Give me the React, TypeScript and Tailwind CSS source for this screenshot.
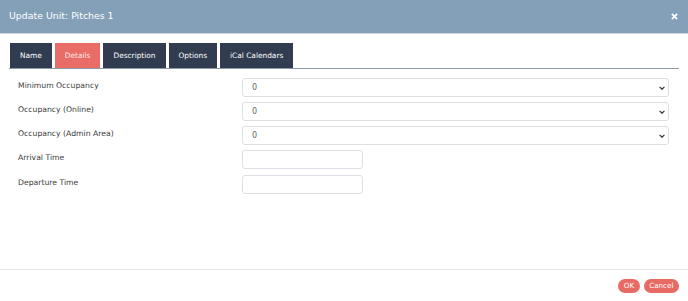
import React from 'react'

const tabs = ['Name', 'Details', 'Description', 'Options', 'iCal Calendars']

const Chevron: React.FunctionComponent = () => (
	<svg viewBox="0 0 10 6" className="h-[4px] w-[6px]" aria-hidden="true">
		<path d="M1 1 L5 5 L9 1" fill="none" stroke="#333" strokeWidth={2} />
	</svg>
)

const SelectRow: React.FunctionComponent<{label: string, value: string}> = ({label, value}) => (
	<div className="flex h-[24px] items-start">
		<div className="w-[233px] pl-[9px] pt-[2px] text-[7.7px] text-[#3a3a3a]">{label}</div>
		<div className="flex h-[19px] flex-1 items-center justify-between rounded-[3px] border border-[#dcdfe3] pl-[9px] pr-[3px] text-[8px] text-[#666]">
			<span>{value}</span>
			<Chevron />
		</div>
	</div>
)

const InputRow: React.FunctionComponent<{label: string}> = ({label}) => (
	<div className="flex h-[24.5px] items-start">
		<div className="w-[233px] pl-[9px] pt-[2px] text-[7.7px] text-[#3a3a3a]">{label}</div>
		<div className="h-[19px] w-[121px] rounded-[3px] border border-[#dcdfe3]" />
	</div>
)

export default function App() {
	return (
		<div className="flex h-[301px] w-[688px] flex-col bg-white" style={{fontFamily: '"DejaVu Sans", sans-serif'}}>
			<div className="flex h-[34px] items-center justify-between border-b border-[#c9d5df] bg-[#84a0b8] pl-[9px] pr-[10px]">
				<span className="text-[9.4px] text-white">Update Unit: Pitches 1</span>
				<svg viewBox="0 0 8 8" className="h-[7px] w-[7px]" aria-hidden="true">
					<path d="M1 1 L7 7 M7 1 L1 7" stroke="white" strokeWidth={2} />
				</svg>
			</div>
			<div className="flex-1 px-[9px] pt-[9px]">
				<div className="flex gap-[3px] border-b border-[#8d9aa5] pl-[1px]">
					{tabs.map((t) => (
						<div
							key={t}
							className={
								t === 'Details'
									? 'flex h-[25px] items-center bg-[#ea6c66] px-[10px] text-[7.4px] text-[#fde8e6]'
									: 'flex h-[25px] items-center bg-[#323c51] px-[10px] text-[7.4px] text-white'
							}
						>
							{t}
						</div>
					))}
				</div>
				<div className="pr-[10px] pt-[9px]">
					<SelectRow label="Minimum Occupancy" value="0" />
					<SelectRow label="Occupancy (Online)" value="0" />
					<SelectRow label="Occupancy (Admin Area)" value="0" />
					<InputRow label="Arrival Time" />
					<InputRow label="Departure Time" />
				</div>
			</div>
			<div className="flex h-[32px] items-center justify-end gap-[4px] border-t border-[#e3e6e9] pr-[9px]">
				<button className="h-[14px] rounded-full bg-[#e86a64] px-[5.5px] text-[7.2px] leading-[14px] text-white">OK</button>
				<button className="h-[14px] rounded-full bg-[#e86a64] px-[5.5px] text-[7.2px] leading-[14px] text-white">Cancel</button>
			</div>
		</div>
	)
}
